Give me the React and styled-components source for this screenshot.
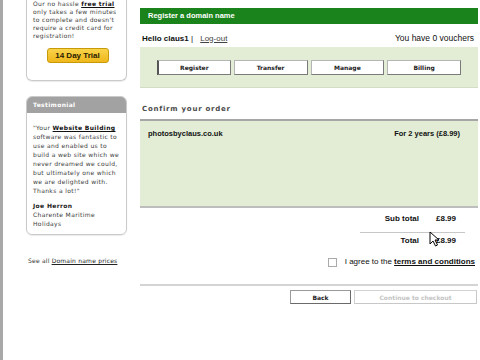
import React from "react";
import styled, { createGlobalStyle } from "styled-components";

const Global = createGlobalStyle`
  html, body { margin: 0; padding: 0; background: #fff; }
  body { width: 480px; height: 360px; overflow: hidden; }
`;

const Frame = styled.div`
  display: flex;
  width: 480px;
  height: 360px;
  box-sizing: border-box;
  overflow: hidden;
  border-left: 3px solid #a8a8a8;
  background: #fff;
`;

const Sidebar = styled.aside`
  width: 101px;
  margin-left: 23px;
  display: flex;
  flex-direction: column;
  font-family: "DejaVu Sans", Verdana, sans-serif;
  font-size: 6px;
  letter-spacing: 0.35px;
  color: #3a3a3a;
`;

const TrialCard = styled.div`
  display: flex;
  flex-direction: column;
  height: 81px;
  box-sizing: border-box;
  padding: 0 8px 0 6px;
  border: 1px solid #cacaca;
  border-top: none;
  border-radius: 0 0 6px 6px;
  box-shadow: 0 1px 1px rgba(0, 0, 0, 0.08);
`;

const SmallText = styled.p`
  margin: 0;
  line-height: ${(p) => p.$lh || 8}px;
  white-space: nowrap;
  font-weight: ${(p) => (p.$bold ? "bold" : "normal")};
  color: ${(p) => (p.$bold ? "#222" : "inherit")};
`;

const Strong = styled.span`
  font-weight: bold;
  color: #111;
  text-decoration: ${(p) => (p.$u ? "underline" : "none")};
`;

const TrialButton = styled.button`
  align-self: center;
  margin: 8px 0 0 4px;
  width: 62px;
  height: 15px;
  padding: 0;
  border: 1px solid #c79a08;
  border-radius: 3px;
  background: linear-gradient(#f9d34a, #efb71c);
  font-family: "Liberation Sans", Arial, sans-serif;
  font-size: 8px;
  font-weight: bold;
  color: #2a2000;
`;

const QuoteCard = styled.div`
  margin-top: 15px;
  border: 1px solid #cacaca;
  border-radius: 6px;
  overflow: hidden;
  box-shadow: 0 1px 1px rgba(0, 0, 0, 0.08);
`;

const QuoteHead = styled.div`
  height: 16px;
  line-height: 16px;
  padding-left: 6px;
  background: #a2a2a2;
  color: #fff;
  font-weight: bold;
`;

const QuoteBody = styled.div`
  padding: 10px 6px 6px 6px;
`;

const Signature = styled.div`
  margin-top: 6px;
`;

const PriceLink = styled.p`
  margin: 21px 0 0 2px;
  line-height: 9px;
  white-space: nowrap;
  letter-spacing: 0.2px;
  color: #333;
  a { color: #222; text-decoration: underline; }
`;

const Main = styled.main`
  width: 338px;
  margin-left: 13px;
  display: flex;
  flex-direction: column;
  font-family: "Liberation Sans", Arial, sans-serif;
  font-size: 8px;
  color: #111;
`;

const TitleBar = styled.div`
  margin-top: 8px;
  height: 16px;
  line-height: 16px;
  padding-left: 8px;
  background: #1b831b;
  color: #fff;
  font-weight: bold;
  font-size: 7.5px;
`;

const UserRow = styled.div`
  display: flex;
  justify-content: space-between;
  align-items: center;
  height: 16px;
  margin: 6px 0 1px;
  padding: 0 4px 0 2px;
`;

const Hello = styled.span`
  b { font-weight: bold; }
  a { margin-left: 5px; color: #444; text-decoration: underline; }
`;

const Vouchers = styled.span`
  font-size: 8.5px;
`;

const TabPanel = styled.div`
  display: grid;
  grid-template-columns: repeat(4, 1fr);
  gap: 3px;
  align-items: center;
  height: 40px;
  padding: 0 17px;
  background: #e3edd6;
  border-bottom: 1px solid #d3dcc7;
`;

const Tab = styled.button`
  height: 15px;
  padding: 0;
  background: #fff;
  border: 1px solid #b5b5b5;
  border-left: ${(p) => (p.$active ? "2px solid #555" : "1px solid #b5b5b5")};
  border-bottom-color: #7a7a7a;
  border-right-color: #7a7a7a;
  font-family: "DejaVu Sans", Verdana, sans-serif;
  font-size: 6px;
  font-weight: bold;
  color: #222;
`;

const Heading = styled.h2`
  margin: 16px 0 5px 2px;
  line-height: 10px;
  font-family: "DejaVu Sans", Verdana, sans-serif;
  font-size: 7px;
  font-weight: bold;
  letter-spacing: 0.75px;
  color: #4a4a4a;
`;

const OrderBox = styled.div`
  height: 85px;
  background: #e3edd6;
  border-top: 2px solid #a6a6a6;
  border-bottom: 2px solid #bdbdbd;
`;

const OrderRow = styled.div`
  display: flex;
  justify-content: space-between;
  padding: 8px 18px 0 8px;
  line-height: 10px;
  font-weight: bold;
  font-size: 7.5px;
`;

const TotalRow = styled.div`
  display: grid;
  grid-template-columns: auto 22px;
  column-gap: 17px;
  justify-content: end;
  margin-top: ${(p) => p.$top}px;
  padding-right: 20px;
  line-height: 10px;
  font-weight: bold;
  font-size: 8px;
  span:first-child { text-align: right; }
`;

const ShortRule = styled.hr`
  align-self: flex-end;
  width: 105px;
  margin: 8px 13px 0 0;
  border: none;
  border-top: 1px solid #c8c8c8;
`;

const ValueCell = styled.span`
  position: relative;
`;

const Cursor = styled.svg`
  position: absolute;
  left: -7px;
  top: -5px;
`;

const AgreeRow = styled.label`
  display: flex;
  justify-content: flex-end;
  align-items: center;
  gap: 8px;
  margin-top: 11px;
  padding-right: 3px;
  line-height: 10px;
  font-size: 8px;
  b { text-decoration: underline; }
`;

const Box = styled.span`
  width: 7px;
  height: 7px;
  border: 1px solid #aaa;
  background: #fff;
`;

const WideRule = styled.hr`
  margin: 17px 0 0;
  border: none;
  height: 2px;
  background: #d4d4d4;
`;

const Actions = styled.div`
  display: flex;
  justify-content: flex-end;
  gap: 3px;
  margin-top: 4px;
  padding-right: 1px;
`;

const ActionButton = styled.button`
  width: ${(p) => p.$w}px;
  height: 14px;
  padding: 0;
  background: #fff;
  border: 1px solid ${(p) => (p.disabled ? "#d2d2d2" : "#9a9a9a")};
  border-bottom-color: ${(p) => (p.disabled ? "#c8c8c8" : "#6a6a6a")};
  border-right-color: ${(p) => (p.disabled ? "#c8c8c8" : "#6a6a6a")};
  font-family: "DejaVu Sans", Verdana, sans-serif;
  font-size: 6px;
  font-weight: bold;
  color: ${(p) => (p.disabled ? "#c4c4c4" : "#222")};
`;

const quote = [
  "software was fantastic to",
  "use and enabled us to",
  "build a web site which we",
  "never dreamed we could,",
  "but ultimately one which",
  "we are delighted with.",
  "Thanks a lot!\"",
];

const tabs = ["Register", "Transfer", "Manage", "Billing"];

export default function App() {
  return (
    <>
      <Global />
      <Frame>
        <Sidebar>
          <TrialCard>
            <SmallText>Our no hassle <Strong $u>free trial</Strong></SmallText>
            <SmallText>only takes a few minutes</SmallText>
            <SmallText>to complete and doesn't</SmallText>
            <SmallText>require a credit card for</SmallText>
            <SmallText>registration!</SmallText>
            <TrialButton>14 Day Trial</TrialButton>
          </TrialCard>

          <QuoteCard>
            <QuoteHead>Testimonial</QuoteHead>
            <QuoteBody>
              <SmallText $lh={9}>"Your <Strong $u>Website Building</Strong></SmallText>
              {quote.map((line) => (
                <SmallText $lh={9} key={line}>{line}</SmallText>
              ))}
              <Signature>
                <SmallText $lh={9} $bold>Joe Herron</SmallText>
                <SmallText $lh={9}>Charente Maritime</SmallText>
                <SmallText $lh={9}>Holidays</SmallText>
              </Signature>
            </QuoteBody>
          </QuoteCard>

          <PriceLink>See all <a>Domain name prices</a></PriceLink>
        </Sidebar>

        <Main>
          <TitleBar>Register a domain name</TitleBar>
          <UserRow>
            <Hello><b>Hello claus1</b> | <a>Log-out</a></Hello>
            <Vouchers>You have 0 vouchers</Vouchers>
          </UserRow>
          <TabPanel>
            {tabs.map((t, i) => (
              <Tab key={t} $active={i === 0}>{t}</Tab>
            ))}
          </TabPanel>

          <Heading>Confirm your order</Heading>
          <OrderBox>
            <OrderRow>
              <span>photosbyclaus.co.uk</span>
              <span>For 2 years (£8.99)</span>
            </OrderRow>
          </OrderBox>

          <TotalRow $top={6}>
            <span>Sub total</span>
            <span>£8.99</span>
          </TotalRow>
          <ShortRule />
          <TotalRow $top={3}>
            <span>Total</span>
            <ValueCell>
              £8.99
              <Cursor width="11" height="16" viewBox="0 0 11 16">
                <path d="M1 1 L1 13 L4 10 L6.5 15 L8.5 14 L6 9 L10 9 Z" fill="#fff" stroke="#000" strokeWidth="1" strokeLinejoin="round" />
              </Cursor>
            </ValueCell>
          </TotalRow>

          <AgreeRow>
            <Box />
            <span>I agree to the <b>terms and conditions</b></span>
          </AgreeRow>

          <WideRule />
          <Actions>
            <ActionButton $w={61}>Back</ActionButton>
            <ActionButton $w={123} disabled>Continue to checkout</ActionButton>
          </Actions>
        </Main>
      </Frame>
    </>
  );
}
